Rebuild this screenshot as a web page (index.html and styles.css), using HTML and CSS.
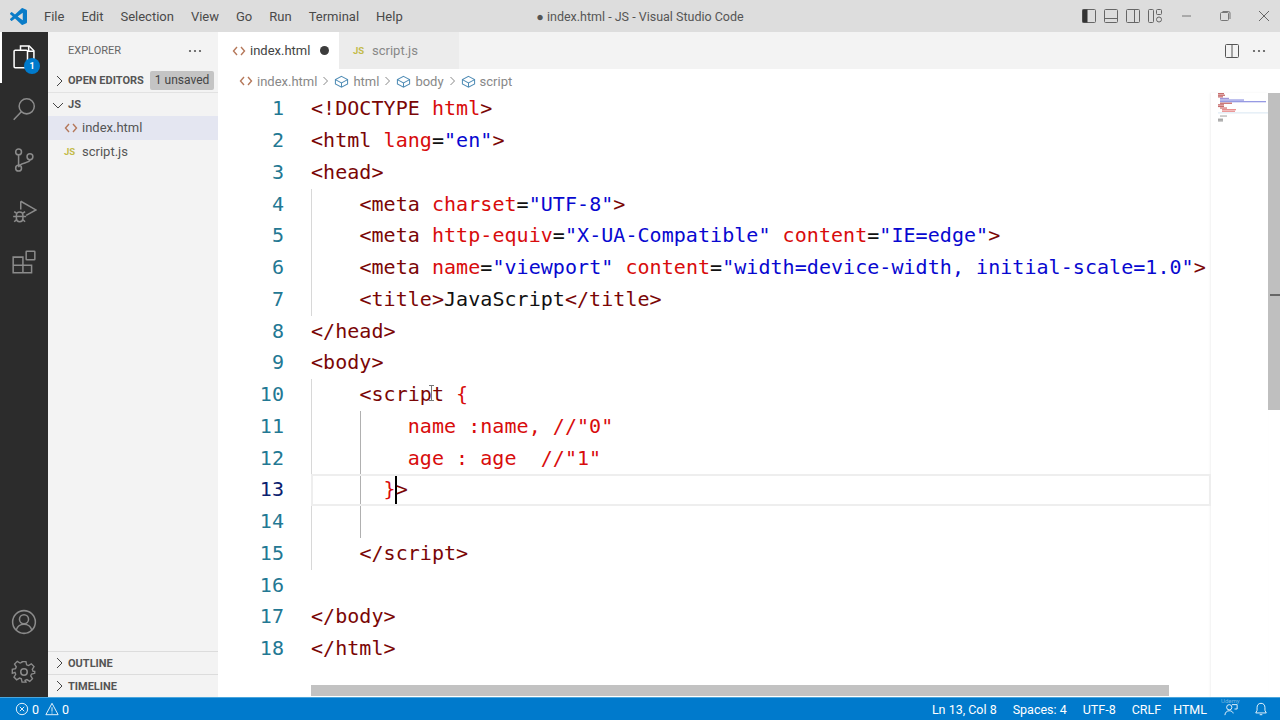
FILE: index.html
```html
<!DOCTYPE html>
<html lang="en">
<head>
  <meta charset="UTF-8">
  <title>index.html - JS - Visual Studio Code</title>
  <link rel="stylesheet" href="styles.css">
</head>
<body>
  <svg class="defs" width="0" height="0">
    <symbol id="ic-html" viewBox="0 0 14 14"><path d="M5 3 1.500 7 5 11M9 3l3.500 4L9 11" fill="none" stroke="#b5785a" stroke-width="1.400"/></symbol>
    <symbol id="ic-cube" viewBox="0 0 16 16"><path d="M8 2.500 14.500 6v4.500L8 14 1.500 10.500V6zM1.500 6 8 9.500 14.500 6M8 9.500V14" fill="none" stroke="#4f8cb5" stroke-width="1.100"/></symbol>
    <symbol id="ic-dots" viewBox="0 0 14 4"><circle cx="2" cy="2" r="1.100" fill="#555"/><circle cx="7" cy="2" r="1.100" fill="#555"/><circle cx="12" cy="2" r="1.100" fill="#555"/></symbol>
    <symbol id="ic-right" viewBox="0 0 16 16"><path d="M6 3l5 5-5 5" fill="none" stroke="#444"/></symbol>
    <symbol id="ic-down" viewBox="0 0 16 16"><path d="M3 6l5 5 5-5" fill="none" stroke="#444"/></symbol>
    <symbol id="ic-sep" viewBox="0 0 9 14"><path d="M2.500 3 6.500 7l-4 4" fill="none" stroke="#888"/></symbol>
  </svg>
  <div class="window">
    <header class="titlebar">
      <div class="title-left">
        <svg class="logo" viewBox="0 0 100 100" width="17" height="17"><path fill="#0a7cc8" fill-rule="evenodd" d="M96.500 10.800 75.900.9a6.200 6.200 0 0 0-7.100 1.200L29.300 38.100 12.100 25.100a4.200 4.200 0 0 0-5.300.2l-5.500 5a4.200 4.200 0 0 0 0 6.200L16.200 50 1.300 63.500a4.200 4.200 0 0 0 0 6.200l5.500 5a4.200 4.200 0 0 0 5.300.2l17.200-13 39.500 36a6.200 6.200 0 0 0 7.100 1.200l20.600-9.900a6.200 6.200 0 0 0 3.500-5.600V16.400a6.200 6.200 0 0 0-3.500-5.600zM75 72.700 45 50l30-22.700z"/></svg>
        <nav class="menu">
          <span>File</span><span>Edit</span><span>Selection</span><span>View</span><span>Go</span><span>Run</span><span>Terminal</span><span>Help</span>
        </nav>
      </div>
      <div class="title-text">● index.html - JS - Visual Studio Code</div>
      <div class="title-right">
        <div class="layout-icons">
          <svg viewBox="0 0 16 16" width="16" height="16"><rect x="1.500" y="1.500" width="13" height="13" rx="1" fill="none" stroke="#666"/><rect x="1.500" y="1.500" width="5" height="13" fill="#333"/></svg>
          <svg viewBox="0 0 16 16" width="16" height="16"><rect x="1.500" y="1.500" width="13" height="13" rx="1" fill="none" stroke="#666"/><path d="M1.500 10.500h13" stroke="#666"/></svg>
          <svg viewBox="0 0 16 16" width="16" height="16"><rect x="1.500" y="1.500" width="13" height="13" rx="1" fill="none" stroke="#666"/><path d="M9.500 1.500v13" stroke="#666"/></svg>
          <svg viewBox="0 0 16 16" width="16" height="16" fill="none" stroke="#666"><rect x="1.500" y="1.500" width="5" height="13" rx="1"/><rect x="9.500" y="1.500" width="5" height="5" rx="1"/><circle cx="12" cy="11.500" r="2.500"/></svg>
        </div>
        <div class="win-controls">
          <svg viewBox="0 0 12 12" width="12" height="12"><path d="M2 6h9" stroke="#777"/></svg>
          <svg viewBox="0 0 12 12" width="12" height="12" fill="none" stroke="#777"><rect x="1.500" y="2.500" width="8" height="8" rx="1"/><path d="M3.500 1.500h6a1.500 1.500 0 0 1 1.500 1.500v6"/></svg>
          <svg viewBox="0 0 12 12" width="12" height="12"><path d="M1 1l10 10M11 1 1 11" stroke="#666"/></svg>
        </div>
      </div>
    </header>

    <div class="workbench">
      <aside class="activitybar">
        <div class="activity-group">
          <div class="activity-item active">
            <svg viewBox="0 0 24 24" width="28" height="28" fill="none" stroke="#fff" stroke-width="1.300"><path d="M9 7V3.500h7.500l4 4V17.500H15"/><path d="M16 3.500V8h4.500"/><rect x="3.500" y="7" width="11.500" height="15" rx="1"/></svg>
            <span class="badge">1</span>
          </div>
          <div class="activity-item">
            <svg viewBox="0 0 24 24" width="26" height="26" fill="none" stroke="#8b8b8b" stroke-width="1.400"><circle cx="14.500" cy="9.500" r="7"/><path d="M9.500 14.500 2.500 22"/></svg>
          </div>
          <div class="activity-item">
            <svg viewBox="0 0 24 24" width="26" height="26" fill="none" stroke="#8b8b8b" stroke-width="1.400"><circle cx="7" cy="4.500" r="2.700"/><circle cx="7" cy="19.500" r="2.700"/><circle cx="17.500" cy="9" r="2.700"/><path d="M7 7.200v9.600M17.500 11.700c0 3.500-10.500 2.500-10.500 7"/></svg>
          </div>
          <div class="activity-item">
            <svg viewBox="0 0 24 24" width="26" height="26" fill="none" stroke="#8b8b8b" stroke-width="1.400"><path d="M9 3v7.500M9 3l14 8-9 5"/><path d="M3 12.500l2 1.500M13 12.500 11 14M2 17h3M14 17h-3M3 22l2-2M13 22l-2-2"/><rect x="5" y="13" width="6" height="9" rx="3"/><path d="M5 17h6"/></svg>
          </div>
          <div class="activity-item">
            <svg viewBox="0 0 24 24" width="26" height="26" fill="none" stroke="#8b8b8b" stroke-width="1.400"><rect x="14" y="2" width="8" height="8" rx=".5"/><path d="M2 7.500h9V22H2zM2 15h17v7h-8M11 15V7.500"/></svg>
          </div>
        </div>
        <div class="activity-group">
          <div class="activity-item short">
            <svg viewBox="0 0 24 24" width="26" height="26" fill="none" stroke="#8b8b8b" stroke-width="1.400"><circle cx="12" cy="12" r="10.500"/><circle cx="12" cy="9.500" r="4.200"/><path d="M4.800 19.500c1-3.500 3.500-5.500 7.200-5.500s6.200 2 7.200 5.500"/></svg>
          </div>
          <div class="activity-item short">
            <svg viewBox="0 0 24 24" width="26" height="26" fill="none" stroke="#8b8b8b" stroke-width="1.400"><circle cx="12" cy="12" r="3"/><path d="M10 2h4l.7 3.300 1.900.8 2.900-1.800 2.800 2.800-1.800 2.900.8 1.900L23 12v2l-3.300.7-.8 1.900 1.800 2.900-2.800 2.800-2.900-1.800-1.900.8L14 23h-4l-.7-3.300-1.900-.8-2.900 1.800-2.800-2.800 1.800-2.900-.8-1.900L0 14v-4l3.300-.7.8-1.900-1.800-2.900 2.800-2.800 2.900 1.800 1.900-.8z" transform="translate(1.200 .6) scale(.9)"/></svg>
          </div>
        </div>
      </aside>

      <aside class="sidebar">
        <div class="sidebar-head">
          <span>EXPLORER</span>
          <svg width="14" height="4"><use href="#ic-dots"/></svg>
        </div>
        <div class="section-row first">
          <svg class="chev" width="16" height="16"><use href="#ic-right"/></svg>
          <span class="section-name">OPEN EDITORS</span>
          <span class="unsaved">1 unsaved</span>
        </div>
        <div class="section-row folder">
          <svg class="chev" width="16" height="16"><use href="#ic-down"/></svg>
          <span class="section-name">JS</span>
        </div>
        <div class="file-row selected"><svg class="file-icon" width="14" height="14"><use href="#ic-html"/></svg><span>index.html</span></div>
        <div class="file-row"><span class="ic-js">JS</span><span>script.js</span></div>
        <div class="sidebar-fill"></div>
        <div class="section-row ruled">
          <svg class="chev" width="16" height="16"><use href="#ic-right"/></svg>
          <span class="section-name">OUTLINE</span>
        </div>
        <div class="section-row ruled">
          <svg class="chev" width="16" height="16"><use href="#ic-right"/></svg>
          <span class="section-name">TIMELINE</span>
        </div>
      </aside>

      <main class="editor">
        <div class="tabs">
          <div class="tab current"><svg class="file-icon" width="14" height="14"><use href="#ic-html"/></svg><span class="tab-name">index.html</span><span class="dirty"></span></div>
          <div class="tab other"><span class="ic-js">JS</span><span class="tab-name">script.js</span></div>
          <div class="tab-actions">
            <svg viewBox="0 0 16 16" width="16" height="16" fill="none" stroke="#555"><rect x="1.500" y="1.500" width="13" height="13" rx="1"/><path d="M8 1.500v13"/></svg>
            <svg width="14" height="4"><use href="#ic-dots"/></svg>
          </div>
        </div>
        <div class="breadcrumb">
          <svg width="14" height="14"><use href="#ic-html"/></svg><span>index.html</span><svg width="9" height="14"><use href="#ic-sep"/></svg>
          <svg width="15" height="15"><use href="#ic-cube"/></svg><span>html</span><svg width="9" height="14"><use href="#ic-sep"/></svg>
          <svg width="15" height="15"><use href="#ic-cube"/></svg><span>body</span><svg width="9" height="14"><use href="#ic-sep"/></svg>
          <svg width="15" height="15"><use href="#ic-cube"/></svg><span>script</span>
        </div>
        <div class="code-area">
          <div class="code">
            <div class="row"><span class="num">1</span><div class="src"><i>&lt;!DOCTYPE</i> <b>html</b><i>&gt;</i></div></div>
            <div class="row"><span class="num">2</span><div class="src"><i>&lt;html</i> <b>lang</b>=<u>"en"</u><i>&gt;</i></div></div>
            <div class="row"><span class="num">3</span><div class="src"><i>&lt;head&gt;</i></div></div>
            <div class="row"><span class="num">4</span><div class="src g0">    <i>&lt;meta</i> <b>charset</b>=<u>"UTF-8"</u><i>&gt;</i></div></div>
            <div class="row"><span class="num">5</span><div class="src g0">    <i>&lt;meta</i> <b>http-equiv</b>=<u>"X-UA-Compatible"</u> <b>content</b>=<u>"IE=edge"</u><i>&gt;</i></div></div>
            <div class="row"><span class="num">6</span><div class="src g0">    <i>&lt;meta</i> <b>name</b>=<u>"viewport"</u> <b>content</b>=<u>"width=device-width, initial-scale=1.0"</u><i>&gt;</i></div></div>
            <div class="row"><span class="num">7</span><div class="src g0">    <i>&lt;title&gt;</i>JavaScript<i>&lt;/title&gt;</i></div></div>
            <div class="row"><span class="num">8</span><div class="src"><i>&lt;/head&gt;</i></div></div>
            <div class="row"><span class="num">9</span><div class="src"><i>&lt;body&gt;</i></div></div>
            <div class="row"><span class="num">10</span><div class="src g0">    <i>&lt;script</i> <b>{</b><svg class="ibeam" viewBox="0 0 7 16" width="7" height="16"><path d="M1 .5h5M3.500.5v15M1 15.500h5" fill="none" stroke="#777"/></svg></div></div>
            <div class="row"><span class="num">11</span><div class="src g1">        <b>name :name, //"0"</b></div></div>
            <div class="row"><span class="num">12</span><div class="src g1">        <b>age : age  //"1"</b></div></div>
            <div class="row active"><span class="num">13</span><div class="src g1">      <b>}</b><span class="cursor"></span><i>&gt;</i></div></div>
            <div class="row"><span class="num">14</span><div class="src g1"> </div></div>
            <div class="row"><span class="num">15</span><div class="src g0">    <i>&lt;/script&gt;</i></div></div>
            <div class="row"><span class="num">16</span><div class="src"> </div></div>
            <div class="row"><span class="num">17</span><div class="src"><i>&lt;/body&gt;</i></div></div>
            <div class="row"><span class="num">18</span><div class="src"><i>&lt;/html&gt;</i></div></div>
          </div>
          <div class="minimap">
            <svg viewBox="0 0 50 30" width="50" height="30">
              <g opacity=".7">
                <rect x="0" y="0" width="6" height="1.300" fill="#b03030"/>
                <rect x="0" y="1.600" width="7" height="1.300" fill="#b03030"/>
                <rect x="0" y="3.200" width="5" height="1.300" fill="#b03030"/>
                <rect x="2" y="4.800" width="9" height="1.300" fill="#7a6cc8"/>
                <rect x="2" y="6.400" width="24" height="1.300" fill="#6a70d8"/>
                <rect x="2" y="8" width="46" height="1.300" fill="#6a70d8"/>
                <rect x="2" y="9.600" width="12" height="1.300" fill="#b03030"/>
                <rect x="0" y="11.200" width="6" height="1.300" fill="#b03030"/>
                <rect x="0" y="12.800" width="6" height="1.300" fill="#b03030"/>
                <rect x="2" y="14.400" width="7" height="1.300" fill="#c04040"/>
                <rect x="4" y="16" width="14" height="1.300" fill="#e06060"/>
                <rect x="4" y="17.600" width="13" height="1.300" fill="#e06060"/>
                <rect x="0" y="19.200" width="50" height="1.300" fill="#d5e6f2"/>
                <rect x="2" y="22.400" width="7" height="1.300" fill="#999"/>
                <rect x="0" y="25.600" width="5" height="1.300" fill="#777"/>
                <rect x="0" y="27.200" width="5" height="1.300" fill="#777"/>
              </g>
            </svg>
          </div>
          <div class="overview">
            <div class="slider"></div>
            <div class="tick"></div>
          </div>
          <div class="hscroll"><div class="hthumb"></div></div>
        </div>
      </main>
    </div>

    <footer class="statusbar">
      <div class="status-left">
        <svg viewBox="0 0 16 16" width="14" height="14" fill="none" stroke="#fff"><circle cx="8" cy="8" r="6.500"/><path d="M5.500 5.500l5 5M10.500 5.500l-5 5"/></svg>
        <span>0</span>
        <svg viewBox="0 0 16 16" width="14" height="14" fill="none" stroke="#fff"><path d="M8 1.500 15 14.500H1zM8 6v5M8 12v1.200"/></svg>
        <span>0</span>
      </div>
      <div class="status-right">
        <span>Ln 13, Col 8</span>
        <span>Spaces: 4</span>
        <span>UTF-8</span>
        <span class="crlf">CRLF</span>
        <span>HTML</span>
        <span class="feedback">
          <svg viewBox="0 0 16 16" width="14" height="14" fill="none" stroke="#fff"><circle cx="6" cy="6" r="3"/><path d="M1 15c.5-3.500 2.500-5 5-5s4 1 4.500 3M9 3h6v5h-3"/></svg>
          <span class="mark">Udemy</span>
        </span>
        <svg viewBox="0 0 16 16" width="14" height="14" fill="none" stroke="#fff"><path d="M8 1.500c-3 0-4.500 2-4.500 5v3L2 12.500h12l-1.500-3v-3c0-3-1.500-5-4.500-5zM6.500 14.500h3"/></svg>
      </div>
    </footer>
  </div>
</body>
</html>
```

FILE: styles.css
```css
/* page */
html, body {
  margin: 0;
  padding: 0;
}
body {
  font-family: 'Roboto', 'Noto Sans', sans-serif;
  color: #444;
  background-color: #fff;
  overflow: hidden;
}
.defs {
  position: absolute;
}
.window {
  width: 1280px;
  height: 720px;
  display: flex;
  flex-direction: column;
  overflow: hidden;
}
svg {
  display: block;
  flex: none;
}

/* title bar */
.titlebar {
  height: 32px;
  flex: none;
  display: grid;
  grid-template-columns: 1fr auto 1fr;
  align-items: center;
  background-color: #dddddd;
  font-size: 13px;
  color: #4a4a4a;
}
.title-left {
  display: flex;
  align-items: center;
  padding-left: 10px;
}
.menu {
  display: flex;
  gap: 17px;
  margin-left: 17px;
}
.title-text {
  font-size: 12.500px;
  color: #555;
}
.title-right {
  display: flex;
  justify-content: flex-end;
  align-items: center;
}
.layout-icons {
  display: flex;
  gap: 6px;
}
.win-controls {
  display: flex;
  gap: 27px;
  margin-left: 17px;
  margin-right: 10px;
}

/* activity bar */
.workbench {
  flex: 1;
  display: flex;
  min-height: 0;
}
.activitybar {
  width: 48px;
  flex: none;
  display: flex;
  flex-direction: column;
  justify-content: space-between;
  background-color: #2c2c2c;
}
.activity-item {
  position: relative;
  height: 51px;
  display: flex;
  align-items: center;
  justify-content: center;
}
.activity-item.short {
  height: 50px;
}
.activity-item.active {
  box-shadow: inset 2px 0 0 #fff;
  padding-bottom: 4px;
  height: 47px;
}
.badge {
  position: absolute;
  left: 24px;
  top: 26px;
  width: 16px;
  height: 16px;
  border-radius: 50%;
  background-color: #007acc;
  color: #fff;
  font-size: 9px;
  font-weight: 700;
  line-height: 16px;
  text-align: center;
}

/* explorer */
.sidebar {
  width: 170px;
  flex: none;
  display: flex;
  flex-direction: column;
  background-color: #f3f3f3;
}
.sidebar-head {
  height: 37px;
  flex: none;
  display: flex;
  align-items: center;
  justify-content: space-between;
  padding: 0 16px 0 20px;
  font-size: 11px;
  color: #666;
}
.section-row {
  height: 23px;
  flex: none;
  display: flex;
  align-items: center;
  font-size: 11px;
  font-weight: 700;
  color: #555;
}
.section-row.first {
  border-bottom: 1px solid #e2e2e2;
}
.section-row.ruled {
  border-top: 1px solid #dcdcdc;
  box-sizing: border-box;
}
.chev {
  margin-left: 3px;
  margin-right: 1px;
}
.folder .chev {
  margin-left: 2px;
  margin-right: 2px;
}
.unsaved {
  margin-left: 6px;
  padding: 0 5px;
  height: 19px;
  line-height: 19px;
  border-radius: 2px;
  background-color: #c4c4c4;
  font-weight: 400;
  font-size: 12px;
  color: #444;
  white-space: nowrap;
}
.file-row {
  height: 23.500px;
  flex: none;
  display: flex;
  align-items: center;
  padding-left: 16px;
  font-size: 13px;
  color: #555;
}
.file-row.selected {
  background-color: #e4e6f1;
}
.sidebar-fill {
  flex: 1;
}
.file-icon {
  margin-right: 4px;
}
.ic-js {
  width: 18px;
  flex: none;
  font-size: 9.500px;
  font-weight: 700;
  color: #c3bb4a;
}

/* tabs */
.editor {
  flex: 1;
  min-width: 0;
  display: flex;
  flex-direction: column;
}
.tabs {
  height: 37px;
  flex: none;
  display: flex;
  background-color: #f3f3f3;
  font-size: 13px;
}
.tab {
  width: 120px;
  box-sizing: border-box;
  display: flex;
  align-items: center;
  padding-left: 14px;
}
.tab.current {
  width: 121px;
  background-color: #fff;
  color: #444;
}
.tab.other {
  background-color: #ececec;
  color: #888;
}
.tab.other .ic-js {
  margin-right: 1px;
}
.tab-name {
  margin-left: 0;
}
.dirty {
  width: 9px;
  height: 9px;
  margin-left: 10px;
  border-radius: 50%;
  background-color: #3c3c3c;
}
.tab-actions {
  margin-left: auto;
  display: flex;
  align-items: center;
  gap: 12px;
  padding-right: 14px;
}

/* breadcrumb */
.breadcrumb {
  height: 24px;
  flex: none;
  display: flex;
  align-items: center;
  gap: 4px;
  padding-left: 21px;
  font-size: 13px;
  color: #888;
}

/* code */
.code-area {
  position: relative;
  flex: 1;
  min-height: 0;
  display: flex;
}
.code {
  flex: 1;
  min-width: 0;
  padding-top: .4px;
  font-family: 'DejaVu Sans Mono', monospace;
  font-size: 20px;
  letter-spacing: .05px;
  line-height: 31.750px;
}
.row {
  display: flex;
  height: 31.750px;
}
.num {
  width: 66px;
  flex: none;
  padding-right: 27px;
  text-align: right;
  color: #237893;
}
.src {
  flex: 1;
  min-width: 0;
  position: relative;
  white-space: pre;
  color: #111;
}
.src i, .src b, .src u {
  font-style: normal;
  font-weight: 400;
  text-decoration: none;
}
.src i {
  color: #7a0606;
}
.src b {
  color: #d80c0c;
}
.src u {
  color: #0808d0;
}
.g0 {
  background: linear-gradient(#d8d8d8, #d8d8d8) 0 0 / 1px 100% no-repeat;
}
.g1 {
  background:
    linear-gradient(#d8d8d8, #d8d8d8) 0 0 / 1px 100% no-repeat,
    linear-gradient(#b0b0b0, #b0b0b0) 49px 0 / 1px 100% no-repeat;
}
.row.active .num {
  color: #0b216f;
}
.row.active .src {
  box-shadow: inset 0 0 0 2px #eeeeee;
}
.cursor {
  display: inline-block;
  width: 2px;
  height: 28px;
  margin: 0 -1px;
  vertical-align: -8px;
  background-color: #000;
}
.ibeam {
  position: absolute;
  left: 117px;
  top: 6px;
}

/* minimap and scrollbars */
.minimap {
  width: 57px;
  flex: none;
  box-sizing: border-box;
  padding-left: 7px;
  box-shadow: -1px 0 2px rgba(0,0,0,0.06);
}
.overview {
  width: 12px;
  flex: none;
  position: relative;
}
.slider {
  height: 317px;
  background-color: #bfbfbf;
}
.tick {
  position: absolute;
  left: 2px;
  right: 0;
  top: 201px;
  height: 2px;
  background-color: #666;
}
.hscroll {
  position: absolute;
  left: 93px;
  right: 69px;
  bottom: 1px;
  height: 11px;
}
.hthumb {
  width: 858px;
  height: 100%;
  background-color: #c2c2c2;
}

/* status bar */
.statusbar {
  height: 23px;
  flex: none;
  box-sizing: border-box;
  border-top: 1px solid #4aa6dd;
  display: flex;
  justify-content: space-between;
  align-items: center;
  background-color: #007acc;
  color: #fff;
  font-size: 12.500px;
}
.status-left {
  display: flex;
  align-items: center;
  gap: 3px;
  padding-left: 15px;
}
.status-left span {
  margin-right: 3px;
}
.status-right {
  display: flex;
  align-items: center;
  gap: 16px;
  padding-right: 12px;
}
.crlf {
  margin-right: -4px;
}
.feedback {
  position: relative;
  margin-left: 1px;
}
.mark {
  position: absolute;
  left: -3px;
  top: -5px;
  font-size: 6px;
  line-height: 7px;
  color: rgba(255,255,255,0.45);
}
```
